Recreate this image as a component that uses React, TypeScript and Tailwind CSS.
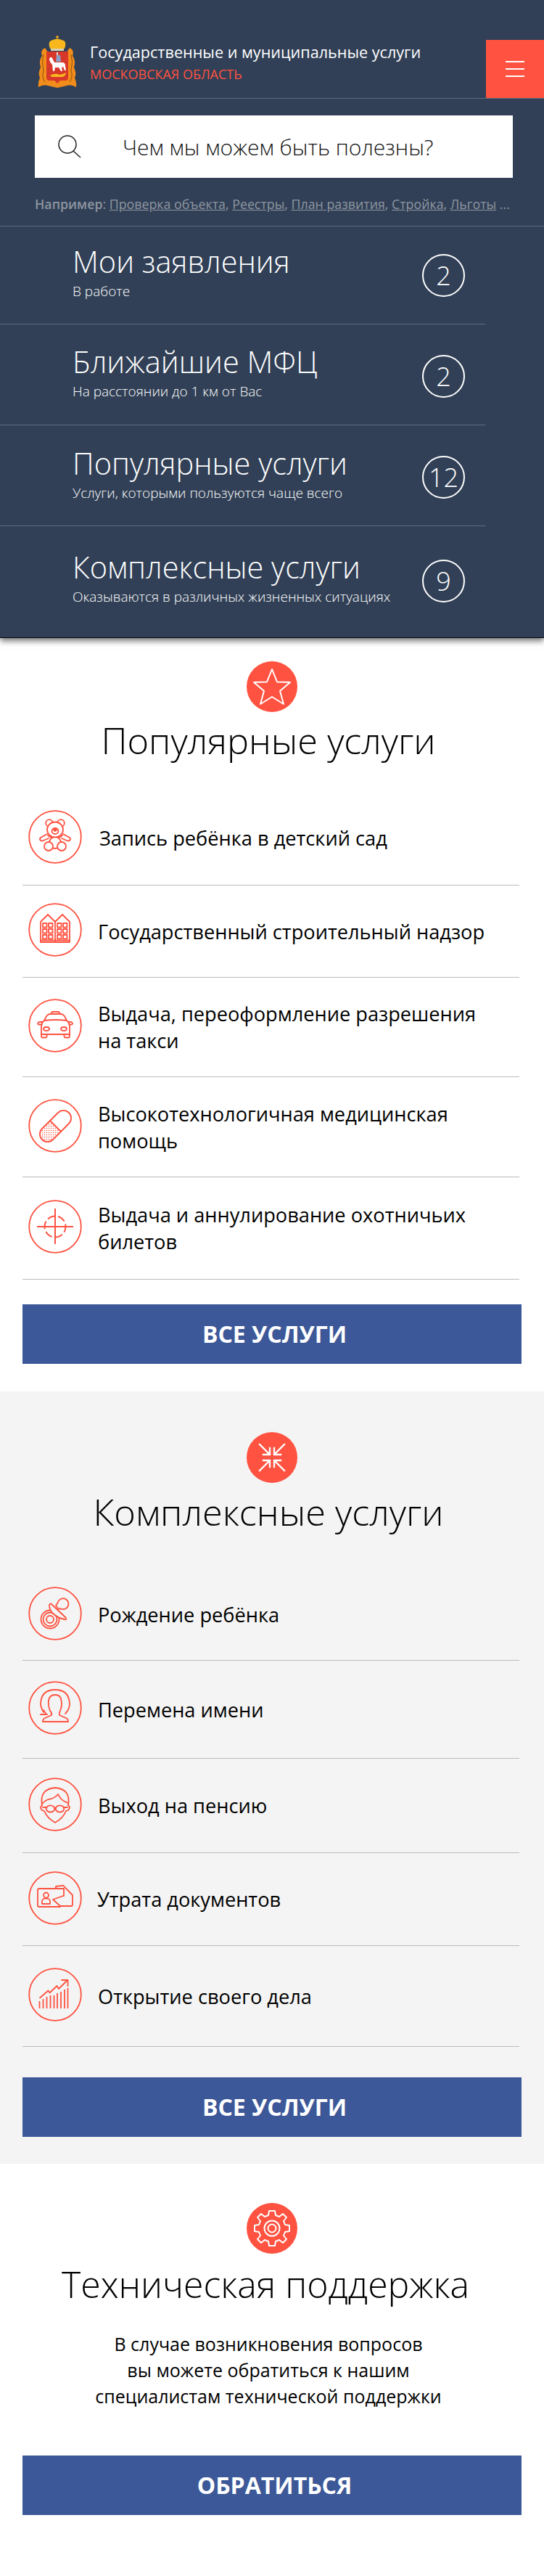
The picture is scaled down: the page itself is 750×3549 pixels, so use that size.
import * as React from 'react';

const services = [
  { title: 'Мои заявления', sub: 'В работе', count: '2', height: 'h-[135px]', top: 'pt-[21px]', ring: 'mt-[38px]', divider: true },
  { title: 'Ближайшие МФЦ', sub: 'На расстоянии до 1 км от Вас', count: '2', height: 'h-[139px]', top: 'pt-[24px]', ring: 'mt-[42px]', divider: true },
  { title: 'Популярные услуги', sub: 'Услуги, которыми пользуются чаще всего', count: '12', height: 'h-[139px]', top: 'pt-[25px]', ring: 'mt-[42px]', divider: true },
  { title: 'Комплексные услуги', sub: 'Оказываются в различных жизненных ситуациях', count: '9', height: 'h-[153px]', top: 'pt-[29px]', ring: 'mt-[46px]', divider: false },
];

const Ring = ({ children }: { children: React.ReactNode }) => (
  <svg viewBox="0 0 74 74" className="w-[74px] h-[74px] shrink-0" fill="none" stroke="#ff5240" strokeWidth="1.8" strokeLinecap="round" strokeLinejoin="round">
    <circle cx="37" cy="37" r="35.8" />
    {children}
  </svg>
);

const BearIcon = () => (
  <Ring>
    <circle cx="29" cy="18" r="4.8" />
    <circle cx="45" cy="18" r="4.8" />
    <path d="M26 33 L17 38 Q15 40 17 42 Q19 43 21 42 L28 39 M48 33 L57 38 Q59 40 57 42 Q55 43 53 42 L46 39" />
    <path d="M27 35 Q37 43 47 35" />
    <ellipse cx="37" cy="45" rx="8" ry="8" fill="#fff" />
    <ellipse cx="37" cy="27" rx="11" ry="10.5" fill="#fff" />
    <ellipse cx="37" cy="29" rx="4.5" ry="4" />
    <circle cx="37" cy="27" r="1.8" fill="#ff5240" />
    <circle cx="28" cy="50" r="6" fill="#fff" />
    <circle cx="46" cy="50" r="6" fill="#fff" />
  </Ring>
);

const BuildingIcon = () => (
  <Ring>
    <path d="M17 54 V26 L27 16 L37 26 L47 16 L57 26 V54 Z" />
    <path d="M37 26 V54 M17 51.5 H57" />
    {[20, 28, 40, 48].map((x) =>
      [28, 36, 44].map((y) => <rect key={`${x}-${y}`} x={x} y={y} width="5.5" height="5.5" />)
    )}
  </Ring>
);

const TaxiIcon = () => (
  <Ring>
    <path d="M32 21 V19.5 Q32 18 34 18 H41 Q43 18 43 19.5 V21" />
    <path d="M22 30 L24 26 Q26 21 31 21 H44 Q49 21 51 26 L53 30" />
    <path d="M22 30 Q18 33 18 39 V49 H57 V39 Q57 33 53 30 Q37 28 22 30 Z" />
    <path d="M20 32 H15 Q13 32.5 13 34 Q13 35.5 15 35.5 H18.5 M55 32 H59 Q61 32.5 61 34 Q61 35.5 59 35.5 H56.5" />
    <ellipse cx="25" cy="41.5" rx="4" ry="2.5" />
    <ellipse cx="49" cy="41.5" rx="4" ry="2.5" />
    <path d="M18 49 V52 Q18 53.5 20 53.5 H24 Q25.5 53.5 25.5 52 V49 M49.5 49 V52 Q49.5 53.5 51 53.5 H55 Q57 53.5 57 52 V49" />
  </Ring>
);

const PillIcon = () => (
  <Ring>
    <defs>
      <pattern id="dots" width="3" height="3" patternUnits="userSpaceOnUse">
        <circle cx="1.5" cy="1.5" r="0.75" fill="#ff5240" stroke="none" />
      </pattern>
    </defs>
    <path d="M30 30 L19 41 A10.5 10.5 0 0 0 34 56 L45 45 Z" fill="url(#dots)" />
    <path d="M30 30 L41 19 A10.5 10.5 0 0 1 56 34 L45 45" />
  </Ring>
);

const CrosshairIcon = () => (
  <Ring>
    <circle cx="37" cy="37" r="14.5" strokeDasharray="11 4" strokeLinecap="butt" strokeDashoffset="3" strokeWidth="2" />
    <path d="M37 12 V61 M12 37 H62" strokeLinecap="butt" strokeWidth="2" />
  </Ring>
);

const PacifierIcon = () => (
  <Ring>
    <circle cx="30" cy="45" r="12.5" />
    <circle cx="30" cy="45" r="9.5" />
    <circle cx="30" cy="45" r="5" />
    <path d="M42 31 L44 30 A7.5 7.5 0 1 0 41 21 Q40 24 38 26 Z" fill="#f4f4f4" />
    <path d="M29 25 Q31 22 33 25 L52 43 Q53 46 50 45 Q40 43 33 36 Q29 31 29 25 Z" fill="#f4f4f4" />
  </Ring>
);

const NameIcon = () => (
  <Ring>
    <path d="M30 41 Q27 33 28 27 Q29 19 37 19 Q45 19 45.5 27 Q47 33 44 41 Q42 44 43 47 L52 51 Q55 52 55 56 H20 Q20 52 23 51 L32 47 Q33 44 30 41 Z" />
    <path d="M21 43 Q17 36 17 31 Q18 12 37 12 Q56 12 57 31 Q57 39 51 45" />
    <path d="M17 46 H26 M21 40 L25 46" />
  </Ring>
);

const PensionIcon = () => (
  <Ring>
    <path d="M19 38 Q15 16 37 14 Q59 16 55 38" />
    <path d="M19 36 Q24 31 28 30 Q36 29 41 23 Q45 32 55 35" />
    <path d="M19 38 Q15 41 19 45 L22 46 Q26 56 37 62 Q48 56 52 46 L55 45 Q59 41 55 38" />
    <ellipse cx="30.5" cy="43" rx="5.8" ry="4.6" />
    <ellipse cx="43.5" cy="43" rx="5.8" ry="4.6" />
    <path d="M36 42 Q37 41.5 38 42 M24.5 41 H20 M49.5 41 H54" />
  </Ring>
);

const DocumentIcon = () => (
  <Ring>
    <path d="M44 49 H15 Q13 49 13 47 V26 Q13 24 15 24 H49 V34" />
    <circle cx="24.5" cy="33" r="3.5" />
    <path d="M19 45 Q18 39 22 37.5 H27 Q31 39 30 45 Z" />
    <path d="M38 24 L38 21 L48 19.6 L61 33 V46 Q61 48 59 48 H44 L34 39 L48 34" />
  </Ring>
);

const GrowthIcon = () => (
  <Ring>
    <path d="M16 41.5 L27.5 31.5 L29.5 34.5 L39.5 25 L42 29 L54 17" />
    <path d="M46 17 H54.5 V25" />
    {[15.5, 20.5, 25.5, 30.5, 35.5, 40, 45, 50, 54.5].map((x, i) => (
      <path key={x} d={`M${x} 56 V${[46, 43, 40, 38, 38, 35, 33, 30, 28][i]}`} strokeLinecap="butt" />
    ))}
  </Ring>
);

const listPopular = [
  { icon: <BearIcon />, text: 'Запись ребёнка в детский сад', height: 'h-[130px]', offset: 'ml-[24px]' },
  { icon: <BuildingIcon />, text: 'Государственный строительный надзор', height: 'h-[127px]', offset: 'ml-[22px]' },
  { icon: <TaxiIcon />, text: 'Выдача, переоформление разрешения на такси', height: 'h-[137px]', offset: 'ml-[22px]' },
  { icon: <PillIcon />, text: 'Высокотехнологичная медицинская помощь', height: 'h-[138px]', offset: 'ml-[22px]' },
  { icon: <CrosshairIcon />, text: 'Выдача и аннулирование охотничьих билетов', height: 'h-[141px]', offset: 'ml-[22px]' },
];

const listComplex = [
  { icon: <PacifierIcon />, text: 'Рождение ребёнка', height: 'h-[126px]', offset: 'ml-[22px]' },
  { icon: <NameIcon />, text: 'Перемена имени', height: 'h-[135px]', offset: 'ml-[22px]' },
  { icon: <PensionIcon />, text: 'Выход на пенсию', height: 'h-[130px]', offset: 'ml-[22px]' },
  { icon: <DocumentIcon />, text: 'Утрата документов', height: 'h-[128px]', offset: 'ml-[21px]' },
  { icon: <GrowthIcon />, text: 'Открытие своего дела', height: 'h-[139px]', offset: 'ml-[22px]' },
];

const Badge = ({ children }: { children: React.ReactNode }) => (
  <div className="w-[70px] h-[70px] rounded-full bg-[#ff5240] mx-auto flex items-center justify-center">
    <svg viewBox="0 0 70 70" className="w-[70px] h-[70px]" fill="none" stroke="#fff" strokeWidth="2" strokeLinejoin="round" strokeLinecap="square">
      {children}
    </svg>
  </div>
);

const ServiceList = ({ items }: { items: typeof listPopular }) => (
  <ul className="mx-[31px] w-[685px]">
    {items.map((item) => (
      <li key={item.text} className={`${item.height} flex items-center border-b border-[#bbbbbb] pl-[8px]`}>
        <span className="shrink-0 -mt-[4px]">{item.icon}</span>
        <span className={`${item.offset} w-[545px] text-[27.2px] leading-[37px] font-medium text-black`}>{item.text}</span>
      </li>
    ))}
  </ul>
);

const ActionButton = ({ label }: { label: string }) => (
  <button className="block mx-auto w-[688px] h-[82px] pl-[7px] bg-[#3c5898] text-white text-[32px] font-bold">{label}</button>
);

const Coat = () => (
  <svg viewBox="0 0 54 73" className="w-[54px] h-[73px] shrink-0">
    <path d="M27 0 V5 M25 2 H29" stroke="#f6a81c" strokeWidth="1.4" />
    <path d="M17 18 Q13 7 21 6 Q25 4 27 5 Q29 4 33 6 Q41 7 37 18 Z" fill="#f7b71d" />
    <rect x="18" y="18" width="18" height="3" fill="#d9d3b5" />
    <path d="M10 17 L15 24 H39 L44 17 Q51 20 48 28 Q53 34 50 44 Q54 52 51 58 Q54 66 53 71 Q46 67 40 69 L27 72 L14 69 Q8 67 1 71 Q0 66 3 58 Q0 52 4 44 Q1 34 6 28 Q3 20 10 17 Z" fill="#f28c1a" />
    <path d="M8 26 Q5 36 8 48 Q5 58 10 64 M46 26 Q49 36 46 48 Q49 58 44 64" stroke="#8a5410" strokeWidth="1" fill="none" />
    <path d="M12 22 H42 V58 Q42 62 38 62 H31 L27 66 L23 62 H16 Q12 62 12 58 Z" fill="#d8382a" />
    <path d="M16 32 Q18 28 20 31 L23 37 H34 Q38 37 38 42 L39 48 L37 48 L35 43 L33 44 L34 49 L32 49 L29 44 L24 44 L23 49 L21 49 L20 40 Q16 36 16 32 Z" fill="#fff" />
    <path d="M26 27 H31 L32 36 H25 Z" fill="#8aa0c8" />
    <path d="M27 23 V27" stroke="#ddd" strokeWidth="2" />
    <path d="M17 55 Q24 51 30 54 Q36 53 39 51 Q38 57 33 57 H21 Q18 57 17 55 Z" fill="#f7b71d" />
  </svg>
);

export default function App() {
  return (
    <div className="w-[750px] bg-white font-['Open_Sans',sans-serif]">
      {/* Dark header block */}
      <div className="relative z-10 bg-[#314056] border-b border-black shadow-[0_4px_8px_rgba(0,0,0,0.55)]">
        <div className="h-[136px] flex items-end border-b border-[#5f6c80]">
          <div className="flex items-center pl-[52px] pb-[13px] flex-1">
            <Coat />
            <div className="ml-[18px] pt-[2px]">
              <div className="text-[21.6px] leading-[30px] text-white">Государственные и муниципальные услуги</div>
              <div className="text-[18px] leading-[30px] text-[#ff5240]">МОСКОВСКАЯ ОБЛАСТЬ</div>
            </div>
          </div>
          <button className="w-[80px] h-[80px] bg-[#ff5240] flex flex-col items-center justify-center gap-[8px] shrink-0">
            <span className="block w-[26px] h-[2px] bg-white" />
            <span className="block w-[26px] h-[2px] bg-white" />
            <span className="block w-[26px] h-[2px] bg-white" />
          </button>
        </div>

        <div className="h-[176px] border-b border-[#5f6c80] px-[48px] pt-[23px]">
          <div className="w-[659px] h-[86px] bg-white flex items-center pl-[32px]">
            <svg viewBox="0 0 32 32" className="w-[32px] h-[32px] shrink-0" fill="none" stroke="#222" strokeWidth="1.5">
              <circle cx="13" cy="13" r="12" />
              <path d="M21 22 L31 31" />
            </svg>
            <span className="ml-[57px] text-[30px] font-light text-[#111]">Чем мы можем быть полезны?</span>
          </div>
          <div className="mt-[21px] text-[17.8px] leading-[30px] whitespace-nowrap text-[#8d95a1]">
            <b className="font-semibold">Например</b>:{' '}
            <span className="underline">Проверка объекта</span>, <span className="underline">Реестры</span>,{' '}
            <span className="underline">План развития</span>, <span className="underline">Стройка</span>,{' '}
            <span className="underline">Льготы</span> ...
          </div>
        </div>

        {services.map((s) => (
          <div key={s.title} className={`${s.height} w-[669px] pl-[100px] pr-[28px] flex items-start justify-between ${s.divider ? 'border-b border-[#5f6c80]' : ''}`}>
            <div className={`${s.top} text-white`}>
              <div className="text-[41.5px] leading-[54px] font-light whitespace-nowrap">{s.title}</div>
              <div className="mt-[2px] text-[19px] leading-[24px] font-light whitespace-nowrap">{s.sub}</div>
            </div>
            <div className={`${s.ring} w-[59px] h-[59px] shrink-0 rounded-full border-2 border-white text-white text-[36px] font-light flex items-center justify-center`}>
              {s.count}
            </div>
          </div>
        ))}
      </div>

      {/* Popular services */}
      <section className="pt-[32px] pb-[38px]">
        <Badge>
          <path d="M35 11 L42 28.5 L60 29 L46 41 L51 59 L35 49 L19 59 L24 41 L10 29 L28 28.5 Z" />
        </Badge>
        <h2 className="mt-[4px] mb-[35px] pr-[10px] text-center text-[50.5px] leading-[70px] font-light text-black">Популярные услуги</h2>
        <ServiceList items={listPopular} />
        <div className="mt-[34px]">
          <ActionButton label="ВСЕ УСЛУГИ" />
        </div>
      </section>

      {/* Complex services */}
      <section className="bg-[#f4f4f4] pt-[56px] pb-[37px]">
        <Badge>
          <path d="M18 17 L32 31 M32 22 V31 H23 M52 17 L38 31 M38 22 V31 H47 M18 53 L32 39 M32 48 V39 H23 M52 53 L38 39 M38 48 V39 H47" strokeWidth="2.4" />
        </Badge>
        <h2 className="mt-[5px] mb-[44px] pr-[10px] text-center text-[50.5px] leading-[70px] font-light text-black">Комплексные услуги</h2>
        <ServiceList items={listComplex} />
        <div className="mt-[42px]">
          <ActionButton label="ВСЕ УСЛУГИ" />
        </div>
      </section>

      {/* Support */}
      <section className="pt-[54px] pb-[84px] text-center">
        <Badge>
          <circle cx="35" cy="35" r="5.5" />
          <circle cx="35" cy="35" r="10.5" />
          <path d="M31 11 H39 L40 17 L45 19 L50 15 L55 20 L51 25 L53 30 L59 31 V39 L53 40 L51 45 L55 50 L50 55 L45 51 L40 53 L39 59 H31 L30 53 L25 51 L20 55 L15 50 L19 45 L17 40 L11 39 V31 L17 30 L19 25 L15 20 L20 15 L25 19 L30 17 Z" />
        </Badge>
        <h2 className="mt-[7px] pr-[18px] text-[50px] leading-[70px] font-light text-black">Техническая поддержка</h2>
        <p className="mt-[29px] pr-[10px] text-[25px] leading-[36px] font-medium text-black">
          В случае возникновения вопросов
          <br />
          вы можете обратиться к нашим
          <br />
          специалистам технической поддержки
        </p>
        <div className="mt-[64px]">
          <ActionButton label="ОБРАТИТЬСЯ" />
        </div>
      </section>
    </div>
  );
}
